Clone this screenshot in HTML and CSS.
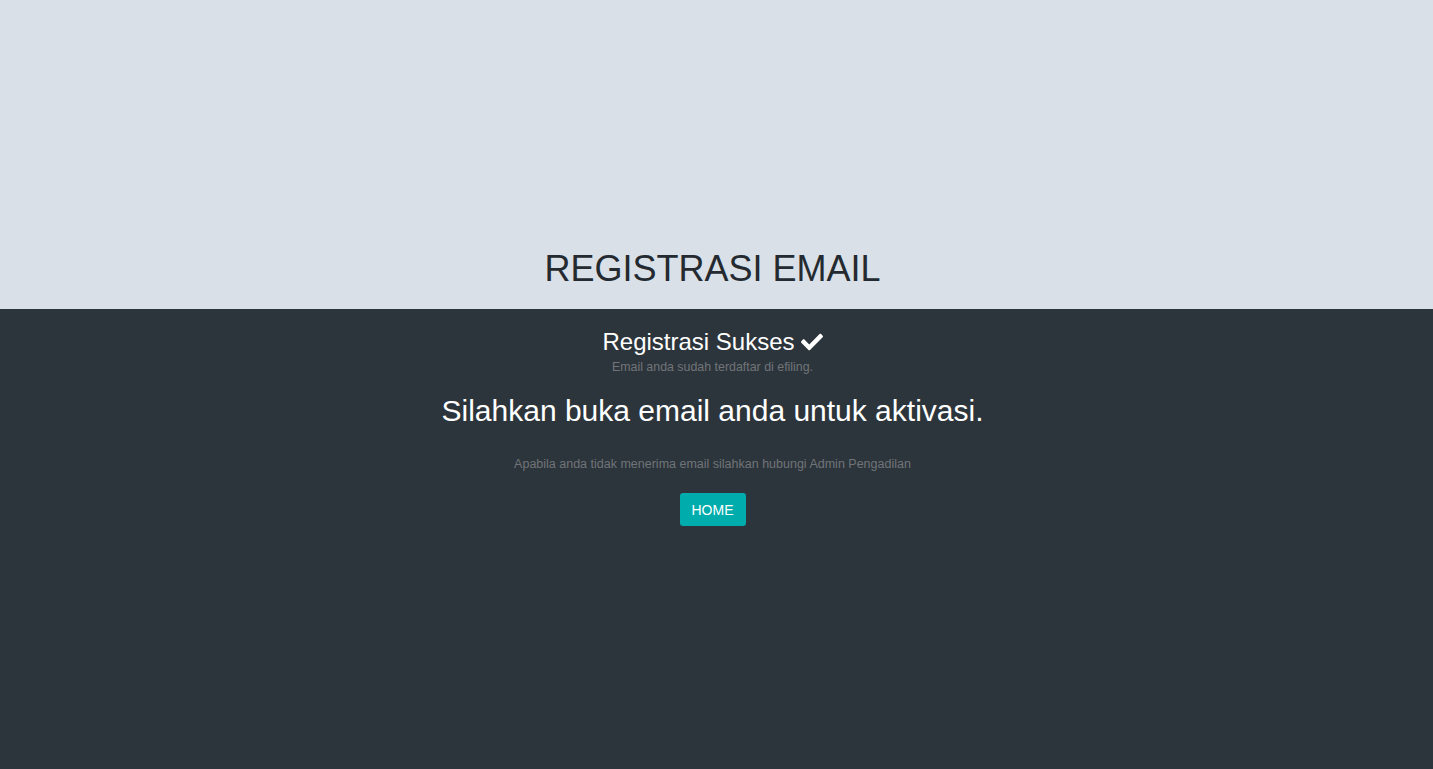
FILE: index.html
```html
<!DOCTYPE html>
<html>
<head>
<meta charset="utf-8">
<link rel="stylesheet" href="styles.css">
</head>
<body>
<header class="top">
  <h1 class="title">REGISTRASI EMAIL</h1>
</header>
<main class="content">
  <h3 class="success">Registrasi Sukses <svg class="check" viewBox="0 0 512 512" width="22" height="22"><path fill="#fff" d="M173.9 439.4l-166.4-166.4c-10-10-10-26.2 0-36.2l36.2-36.2c10-10 26.2-10 36.2 0L192 312.7 432.1 72.6c10-10 26.2-10 36.2 0l36.2 36.2c10 10 10 26.2 0 36.2l-294.4 294.4c-10 10-26.2 10-36.2 0z"/></svg></h3>
  <p class="sub">Email anda sudah terdaftar di efiling.</p>
  <h2 class="big">Silahkan buka email anda untuk aktivasi.</h2>
  <p class="note">Apabila anda tidak menerima email silahkan hubungi Admin Pengadilan</p>
  <a class="btn" href="#">HOME</a>
</main>
</body>
</html>
```
FILE: styles.css
```css
html, body {
  margin: 0;
  padding: 0;
  height: 100%;
}
body {
  font-family: "Liberation Sans", Arial, sans-serif;
  background: #2d353c;
  display: flex;
  flex-direction: column;
}
.top {
  background: #d9e0e7;
  height: 309px;
  padding-right: 8px;
  display: flex;
  align-items: flex-end;
  justify-content: center;
}
.title {
  margin: 0 0 20px;
  font-size: 36px;
  font-weight: 400;
  color: #242a30;
  line-height: 1.1;
}
.content {
  flex: 1;
  padding-right: 8px;
  display: flex;
  flex-direction: column;
  align-items: center;
  text-align: center;
}
.success {
  margin: 20px 0 0;
  font-size: 24px;
  font-weight: 400;
  color: #fff;
  line-height: 1.1;
  display: flex;
  align-items: center;
  gap: 6px;
}
.check { display: block; }
.sub {
  margin: 5px 0 0;
  font-size: 12.4px;
  color: #707478;
}
.big {
  margin: 20px 0 0;
  font-size: 30px;
  font-weight: 400;
  color: #fff;
  line-height: 1.1;
}
.note {
  margin: 30px 0 0;
  font-size: 12.5px;
  color: #707478;
}
.btn {
  display: inline-block;
  margin-top: 22px;
  background: #00acac;
  color: #fff;
  font-size: 14px;
  text-decoration: none;
  padding: 9px 12px 8px;
  border-radius: 3px;
  line-height: 16px;
}
```
